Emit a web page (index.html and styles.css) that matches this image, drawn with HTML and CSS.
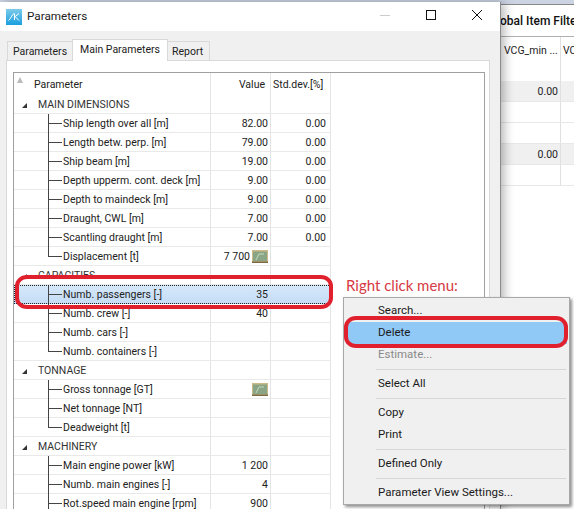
FILE: index.html
```html
<!DOCTYPE html>
<html lang="en">
<head>
<meta charset="utf-8">
<title>Parameters</title>
<link rel="stylesheet" href="styles.css">
</head>
<body>
<div class="desk">
  <section class="window">
    <header class="titlebar">
      <svg class="logo" viewBox="0 0 16 16"><defs><linearGradient id="lg" x1="0" y1="0" x2="0" y2="1"><stop offset="0" stop-color="#7ccbea"/><stop offset="1" stop-color="#1b9fe0"/></linearGradient></defs><rect width="16" height="16" fill="url(#lg)"/><path d="M2.500 11.500C5 10 6 5 8 4.500M8.500 11V4.500M8.500 8L13 4.500M9.500 8L13 11.500" fill="none" stroke="#fff" stroke-width="1"/></svg>
      <span class="title">Parameters</span>
      <div class="winbtns">
        <svg class="wb" viewBox="0 0 46 29"><path d="M18 13.500H28" stroke="#ccc"/></svg>
        <svg class="wb" viewBox="0 0 46 29"><rect x="18.500" y="8.500" width="9" height="9" fill="none" stroke="#111"/></svg>
        <svg class="wb" viewBox="0 0 46 29"><path d="M18 8L28 18M28 8L18 18" fill="none" stroke="#111"/></svg>
      </div>
    </header>
    <div class="body">
      <nav class="tabs">
        <span class="tab first">Parameters</span>
        <span class="tab active">Main Parameters</span>
        <span class="tab last">Report</span>
      </nav>
      <div class="pane">
        <div class="table">
          <div class="row head"><div class="c1"><span class="sort"></span>Parameter</div><div class="c2">Value</div><div class="c3">Std.dev.[%]</div></div>

          <div class="row group"><div class="c1"><i class="tri"></i>MAIN DIMENSIONS</div><div class="c2"></div><div class="c3"></div></div>
          <div class="row"><div class="c1"><i class="tee"></i>Ship length over all [m]</div><div class="c2">82.00</div><div class="c3">0.00</div></div>
          <div class="row"><div class="c1"><i class="tee"></i>Length betw. perp. [m]</div><div class="c2">79.00</div><div class="c3">0.00</div></div>
          <div class="row"><div class="c1"><i class="tee"></i>Ship beam [m]</div><div class="c2">19.00</div><div class="c3">0.00</div></div>
          <div class="row"><div class="c1"><i class="tee"></i>Depth upperm. cont. deck [m]</div><div class="c2">9.00</div><div class="c3">0.00</div></div>
          <div class="row"><div class="c1"><i class="tee"></i>Depth to maindeck [m]</div><div class="c2">9.00</div><div class="c3">0.00</div></div>
          <div class="row"><div class="c1"><i class="tee"></i>Draught, CWL [m]</div><div class="c2">7.00</div><div class="c3">0.00</div></div>
          <div class="row"><div class="c1"><i class="tee"></i>Scantling draught [m]</div><div class="c2">7.00</div><div class="c3">0.00</div></div>
          <div class="row"><div class="c1"><i class="elbow"></i>Displacement [t]</div><div class="c2">7 700<svg class="calc" viewBox="0 0 16 13"><rect width="16" height="13" fill="#cdb988"/><rect x="1" y="1.500" width="14" height="9.500" fill="#8aa585"/><path d="M4 10L7 4H12" fill="none" stroke="#c4d8bc"/><rect y="11.500" width="16" height="1.500" fill="#7a6a45"/></svg></div><div class="c3"></div></div>

          <div class="row group"><div class="c1"><i class="tri"></i>CAPACITIES</div><div class="c2"></div><div class="c3"></div></div>
          <div class="row selected"><div class="c1"><i class="tee"></i>Numb. passengers [-]</div><div class="c2">35</div><div class="c3"></div></div>
          <div class="row"><div class="c1"><i class="tee"></i>Numb. crew [-]</div><div class="c2">40</div><div class="c3"></div></div>
          <div class="row"><div class="c1"><i class="tee"></i>Numb. cars [-]</div><div class="c2"></div><div class="c3"></div></div>
          <div class="row"><div class="c1"><i class="elbow"></i>Numb. containers [-]</div><div class="c2"></div><div class="c3"></div></div>

          <div class="row group"><div class="c1"><i class="tri"></i>TONNAGE</div><div class="c2"></div><div class="c3"></div></div>
          <div class="row"><div class="c1"><i class="tee"></i>Gross tonnage [GT]</div><div class="c2"><svg class="calc" viewBox="0 0 16 13"><rect width="16" height="13" fill="#cdb988"/><rect x="1" y="1.500" width="14" height="9.500" fill="#8aa585"/><path d="M4 10L7 4H12" fill="none" stroke="#c4d8bc"/><rect y="11.500" width="16" height="1.500" fill="#7a6a45"/></svg></div><div class="c3"></div></div>
          <div class="row"><div class="c1"><i class="tee"></i>Net tonnage [NT]</div><div class="c2"></div><div class="c3"></div></div>
          <div class="row"><div class="c1"><i class="elbow"></i>Deadweight [t]</div><div class="c2"></div><div class="c3"></div></div>

          <div class="row group"><div class="c1"><i class="tri"></i>MACHINERY</div><div class="c2"></div><div class="c3"></div></div>
          <div class="row"><div class="c1"><i class="tee"></i>Main engine power [kW]</div><div class="c2">1 200</div><div class="c3"></div></div>
          <div class="row"><div class="c1"><i class="tee"></i>Numb. main engines [-]</div><div class="c2">4</div><div class="c3"></div></div>
          <div class="row"><div class="c1"><i class="tee"></i>Rot.speed main engine [rpm]</div><div class="c2">900</div><div class="c3"></div></div>
        </div>
      </div>
    </div>
  </section>
  <aside class="behind">
    <div class="behind-title"><span>obal Item Filter</span></div>
    <div class="behind-grid">
      <div class="behind-head"><span class="bh1">VCG_min ...</span><span class="bh2">VC</span></div>
      <div class="brow shade"><span>0.00</span><span></span></div>
      <div class="brow"><span></span><span></span></div>
      <div class="brow"><span></span><span></span></div>
      <div class="brow shade"><span>0.00</span><span></span></div>
      <div class="brow"><span></span><span></span></div>
    </div>
  </aside>
</div>

<div class="annot">Right click menu:</div>
<div class="ring ring-row"></div>

<div class="menu">
  <div class="mi">Search...</div>
  <div class="mi hot">Delete</div>
  <div class="mi off">Estimate...</div>
  <div class="sep"></div>
  <div class="mi">Select All</div>
  <div class="sep"></div>
  <div class="mi">Copy</div>
  <div class="mi">Print</div>
  <div class="sep"></div>
  <div class="mi">Defined Only</div>
  <div class="sep"></div>
  <div class="mi">Parameter View Settings...</div>
</div>
<div class="ring ring-menu"></div>
</body>
</html>
```
FILE: styles.css
```css
* { box-sizing: border-box; }
html, body { margin: 0; height: 100%; }
body {
  width: 574px;
  height: 509px;
  overflow: hidden;
  position: relative;
  background: #fff;
  font: 10.500px/1 Roboto, sans-serif;
  color: #222;
}
.desk { display: flex; height: 509px; overflow: hidden; background: #ccd4e4; padding-top: 2px; }
.window { width: 501px; flex: none; background: #f0f0f0; display: flex; flex-direction: column; position: relative; z-index: 1; border-right: 1px solid #8a8a8a; box-shadow: 3px 0 10px rgba(0,0,0,.3); }
.titlebar { height: 29px; flex: none; background: #fff; display: flex; align-items: center; padding-left: 6px; }
.logo { width: 16px; height: 16px; flex: none; }
.title { font-size: 11.700px; margin-left: 5px; color: #222; }
.winbtns { margin-left: auto; display: flex; }
.wb { width: 46px; height: 29px; display: block; }
.body { flex: 1; padding: 8px 10px 0 6px; min-height: 0; display: flex; flex-direction: column; }
.tabs { display: flex; height: 21px; flex: none; align-items: flex-end; }
.tab { height: 19px; padding: 5px 5px 0; background: #f0f0f0; border: 1px solid #d9d9d9; border-bottom: 0; margin-right: -1px; }
.tab.first { width: 66px; margin-left: 1px; }
.tab.last { width: 43px; padding-left: 4px; }
.tab.active { width: 96px; height: 22px; background: #fff; padding: 5px 7px 0; position: relative; z-index: 1; margin-bottom: -1px; }
.pane { flex: 1; min-height: 0; background: #fff; border: 1px solid #d9d9d9; border-bottom: 0; padding: 11px 4px 0 6px; overflow: hidden; }
.table { height: 100%; border: 1px solid #a0a0a0; border-bottom: 0; }
.row { display: flex; height: 19px; border-bottom: 1px solid #e9e9e9; width: 317px; }
.row > div { height: 100%; display: flex; align-items: center; border-right: 1px solid #e4e4e4; padding-top: 2px; }
.c1 { width: 197px; padding-left: 34px; flex: none; white-space: nowrap; }
.c2 { width: 60px; flex: none; justify-content: flex-end; padding-right: 2px; }
.c3 { width: 60px; flex: none; justify-content: flex-end; padding-right: 4px; }
.head { height: 22px; border-bottom: 0; }
.head .c1 { padding-left: 20px; position: relative; }
.head .c2 { padding-right: 5px; }
.head .c3 { justify-content: flex-start; padding-left: 2px; padding-right: 0; }
.sort { position: absolute; left: 3px; top: 4px; width: 0; height: 0; border-left: 3px solid transparent; border-right: 3px solid transparent; border-bottom: 6px solid #bbb; }
.group .c1 { padding-left: 8px; color: #333; }
.tri { width: 0; height: 0; border-left: 5px solid transparent; border-bottom: 5px solid #333; margin-right: 11px; flex: none; }
.tee { width: 14px; height: 19px; margin-top: -2px; align-self: flex-start; flex: none; border-left: 1px solid #444; background: linear-gradient(#444,#444) center / 100% 1px no-repeat; margin-right: 1px; }
.elbow { width: 14px; height: 10px; margin-top: -2px; align-self: flex-start; flex: none; border-left: 1px solid #444; border-bottom: 1px solid #444; margin-right: 1px; }
.calc { width: 16px; height: 13px; margin-left: 2px; margin-top: -1px; flex: none; }
.selected { background: linear-gradient(#d6e8fa, #c5ddf6); outline: 1px dotted #222; outline-offset: -1px; border-bottom-color: #b8d4f0; }
.selected > div { border-right-color: transparent; }

.behind { flex: 1; min-width: 0; overflow: hidden; background: #fff; margin-top: 2px; border-top: 1px solid #888; }
.behind-title { height: 32px; border-bottom: 1px solid #b0b0b0; display: flex; align-items: center; overflow: hidden; white-space: nowrap; color: #111; font-size: 12px; font-weight: 500; }
.behind-title span { margin-left: -1px; }
.behind-grid { width: 73px; }
.behind-head { height: 44px; display: flex; white-space: nowrap; overflow: hidden; }
.bh1 { width: 60px; flex: none; padding: 9px 0 0 3px; border-right: 1px solid #e0e0e0; }
.bh2 { padding: 9px 0 0 2px; }
.brow { height: 21px; border-bottom: 1px solid #e8e8e8; display: flex; }
.brow span:first-child { width: 60px; flex: none; text-align: right; padding: 6px 2px 0 0; border-right: 1px solid #e0e0e0; }
.shade { background: #f0f0f0; }

.annot { position: absolute; z-index: 2; left: 346px; top: 277px; font: 15px/17px "Lato", sans-serif; color: #d63a44; white-space: nowrap; }
.ring { position: absolute; z-index: 4; border: 4px solid #e1202e; border-radius: 12px / 11px; pointer-events: none; }
.ring-row { left: 15px; top: 275px; width: 318px; height: 34px; }
.ring-menu { left: 344px; top: 316px; width: 224px; height: 32px; }
.menu { position: absolute; z-index: 3; left: 343px; top: 297px; width: 227px; height: 208px; padding: 2px; background: #f0f0f0; border: 1px solid #a8a8a8; box-shadow: 2px 2px 3px rgba(0,0,0,.45); }
.mi { height: 22px; padding-left: 32px; display: flex; align-items: center; color: #1a1a1a; font-size: 11.500px; }
.mi.hot { background: #90c8f6; }
.mi.off { color: #8a8a8a; }
.sep { height: 7px; margin-left: 30px; margin-right: 1px; padding-top: 3px; }
.sep::before { content: ""; display: block; height: 1px; background: #d7d7d7; }
```
